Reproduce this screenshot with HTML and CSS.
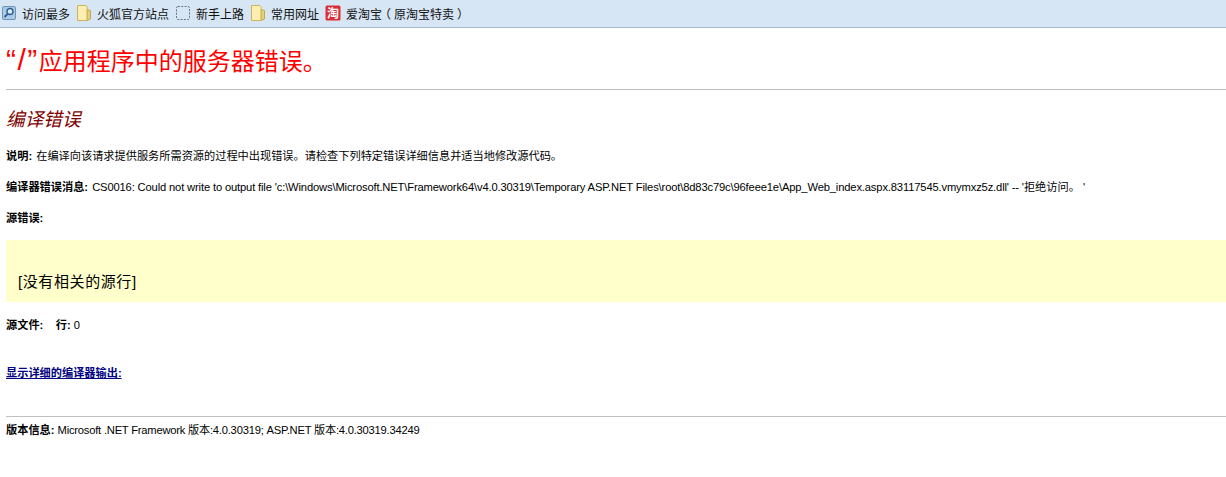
FILE: index.html
```html
<!DOCTYPE html>
<html lang="zh-CN">
<head>
<meta charset="utf-8">
<title>“/”应用程序中的服务器错误。</title>
<link rel="stylesheet" href="styles.css">
</head>
<body>
<nav class="bookmarks">
  <a class="bm">
    <svg class="ico" viewBox="0 0 16 16"><rect x="1.500" y="1.500" width="13" height="13" rx="1.500" fill="#a9cbe6" stroke="#6f94b8"/><circle cx="9" cy="6.500" r="3" fill="#dcebf7" stroke="#2f5f92" stroke-width="1.400"/><path d="M7 8.600 3.500 12" stroke="#2f5f92" stroke-width="2"/></svg>
    <span>访问最多</span>
  </a>
  <a class="bm">
    <svg class="ico" viewBox="0 0 16 16"><path d="M11 4.500l3.500 1v8.500l-3.500 1.500z" fill="#e8cf78" stroke="#c4a850"/><path d="M1.500 .5h8.500l1 1v14h-9.500z" fill="#fbeeb0" stroke="#cfb45c"/></svg>
    <span>火狐官方站点</span>
  </a>
  <a class="bm">
    <svg class="ico" viewBox="0 0 16 16"><rect x="1.500" y="1.500" width="13" height="13" rx="1.500" fill="none" stroke="#6b7480" stroke-dasharray="2 1.300"/></svg>
    <span>新手上路</span>
  </a>
  <a class="bm">
    <svg class="ico" viewBox="0 0 16 16"><path d="M11 4.500l3.500 1v8.500l-3.500 1.500z" fill="#e8cf78" stroke="#c4a850"/><path d="M1.500 .5h8.500l1 1v14h-9.500z" fill="#fbeeb0" stroke="#cfb45c"/></svg>
    <span>常用网址</span>
  </a>
  <a class="bm">
    <svg class="ico" viewBox="0 0 16 16"><rect x="0.500" y="0.500" width="15" height="15" rx="1.500" fill="#dd2a35"/><text class="logo-glyph" x="8" y="12.800" text-anchor="middle">淘</text></svg>
    <span>爱淘宝<span class="paren">（</span>原淘宝特卖<span class="paren">）</span></span>
  </a>
</nav>
<main class="page">
  <h1 class="title"><span class="quoted">“/”</span>应用程序中的服务器错误。</h1>
  <hr class="rule">
  <h2 class="subtitle">编译错误</h2>
  <p class="line"><b>说明:</b> 在编译向该请求提供服务所需资源的过程中出现错误。请检查下列特定错误详细信息并适当地修改源代码。</p>
  <p class="line"><b>编译器错误消息:</b> <span class="lat">CS0016: Could not write to output file 'c:\Windows\Microsoft.NET\Framework64\v4.0.30319\Temporary ASP.NET Files\root\8d83c79c\96feee1e\App_Web_index.aspx.83117545.vmymxz5z.dll' -- '</span>拒绝访问。 '</p>
  <p class="line"><b>源错误:</b></p>
  <pre class="source">[没有相关的源行]</pre>
  <p class="line file"><b>源文件:</b> &nbsp;&nbsp; <b>行:</b> 0</p>
  <p class="line more"><a class="link" href="#">显示详细的编译器输出:</a></p>
  <hr class="rule end">
  <p class="line version"><b>版本信息:</b> <span class="lat">Microsoft .NET Framework 版本:4.0.30319; ASP.NET 版本:4.0.30319.34249</span></p>
</main>
</body>
</html>
```
FILE: styles.css
```css
html, body {
  margin: 0;
  background: #fff;
  color: #000;
  font-family: "Liberation Sans", "Noto Sans CJK SC", sans-serif;
}
.bookmarks {
  display: flex;
  align-items: center;
  gap: 6px;
  height: 28px;
  box-sizing: border-box;
  padding: 0 0 1px 1px;
  background: #d7e6f5;
  border-bottom: 1px solid #a8bacb;
  font-size: 12px;
  color: #111;
}
.bm {
  display: flex;
  align-items: center;
  gap: 5px;
  white-space: nowrap;
}
.paren {
  font-feature-settings: "halt";
  margin: 0 3px;
}
.ico {
  width: 16px;
  height: 16px;
  flex: none;
}
.logo-glyph {
  fill: #fff;
  font-size: 12px;
  font-weight: 700;
}
.page {
  padding-left: 6px;
}
.title {
  margin: 0;
  padding-top: 18px;
  font-size: 24px;
  line-height: 32px;
  font-weight: 400;
  color: #f00;
}
.quoted {
  font-size: 30px;
  line-height: 0;
  letter-spacing: 1.5px;
}
.rule {
  margin: 11px 0 0;
  height: 1px;
  border: 0;
  background: #c0c0c0;
}
.subtitle {
  margin: 16px 0 0;
  font-size: 18.67px;
  line-height: 28px;
  font-weight: 400;
  font-style: italic;
  color: #800000;
}
.line {
  margin: 15px 0 0;
  font-size: 11.2px;
  line-height: 16px;
}
.line b {
  margin-right: 1px;
}
.lat {
  letter-spacing: -0.15px;
}
.subtitle + .line {
  margin-top: 14px;
}
.source {
  margin: 14px 0 0;
  height: 62px;
  box-sizing: border-box;
  padding: 31px 0 0 12px;
  background: #ffffcc;
  font-family: "Liberation Sans", "Noto Sans CJK SC", sans-serif;
  font-size: 15px;
  line-height: 22px;
  letter-spacing: 0.6px;
}
.file {
  margin-top: 15px;
}
.file b,
.version b {
  margin-right: 0;
}
.more {
  margin-top: 32px;
}
.link {
  color: #000080;
  font-weight: 700;
  text-decoration: underline;
}
.end {
  margin-top: 35px;
}
.version {
  margin-top: 5px;
}
.version .lat {
  letter-spacing: -0.22px;
}
```
